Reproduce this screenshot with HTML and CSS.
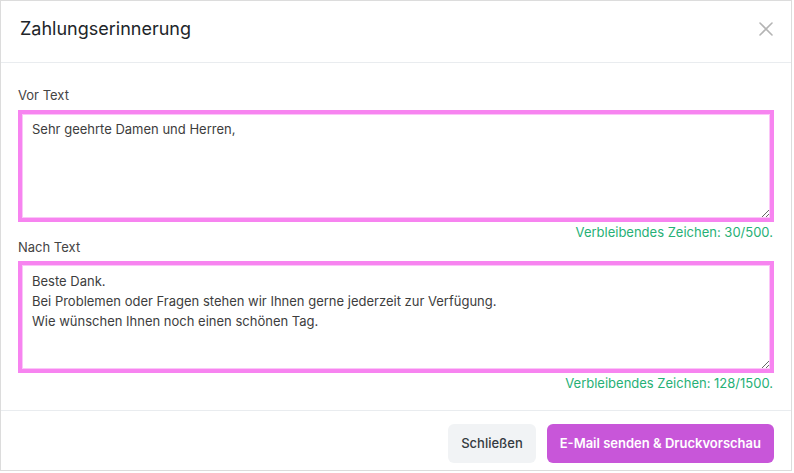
FILE: index.html
```html
<!DOCTYPE html>
<html lang="de">
<head>
<meta charset="utf-8">
<title>Zahlungserinnerung</title>
<link rel="stylesheet" href="styles.css">
</head>
<body>
<div class="modal">
  <div class="modal-header">
    <h1 class="modal-title">Zahlungserinnerung</h1>
    <button class="close" type="button" aria-label="Schließen">
      <svg width="14" height="14" viewBox="0 0 14 14"><path d="M1 1L13 13M13 1L1 13" stroke="#b4b4b4" stroke-width="1.6" fill="none" stroke-linecap="round"/></svg>
    </button>
  </div>
  <div class="modal-body">
    <div class="field">
      <label class="field-label">Vor Text</label>
      <textarea class="field-input field-input-first">Sehr geehrte Damen und Herren,</textarea>
      <div class="counter">Verbleibendes Zeichen: 30/500.</div>
    </div>
    <div class="field">
      <label class="field-label">Nach Text</label>
      <textarea class="field-input">Beste Dank.
Bei Problemen oder Fragen stehen wir Ihnen gerne jederzeit zur Verfügung.
Wie wünschen Ihnen noch einen schönen Tag.</textarea>
      <div class="counter">Verbleibendes Zeichen: 128/1500.</div>
    </div>
  </div>
  <div class="modal-footer">
    <button class="btn btn-secondary" type="button">Schließen</button>
    <button class="btn btn-primary" type="button">E-Mail senden &amp; Druckvorschau</button>
  </div>
</div>
</body>
</html>
```

FILE: styles.css
```css
* { box-sizing: border-box; }

html, body {
  margin: 0;
  padding: 0;
  background: #ffffff;
}

body {
  font-family: Inter, "Noto Sans", "Liberation Sans", sans-serif;
  color: #333;
}

.modal {
  width: 792px;
  border: 1px solid #dcdcdc;
  background: #fff;
}

.modal-header {
  height: 62px;
  display: flex;
  justify-content: space-between;
  align-items: flex-start;
  padding: 17px 18px 0 19px;
  border-bottom: 1px solid #e9ecef;
}

.modal-title {
  margin: 0;
  font-size: 18px;
  line-height: 22px;
  font-weight: 400;
  color: #212529;
}

.close {
  margin-top: 4px;
  width: 14px;
  height: 14px;
  padding: 0;
  border: 0;
  background: none;
  display: flex;
}

.modal-body {
  padding: 24px 17px 20px 17px;
}

.field {
  display: flex;
  flex-direction: column;
}

.field-label {
  font-size: 13px;
  line-height: 16px;
  color: #444;
  margin-bottom: 7px;
}

.field-input {
  display: block;
  width: 100%;
  height: 112px;
  margin: 0;
  border: 4px solid #f784f0;
  outline: 1px solid #fbc6f8;
  outline-offset: -5px;
  border-radius: 0;
  padding: 6px 10px;
  font-family: Inter, "Noto Sans", "Liberation Sans", sans-serif;
  font-size: 13px;
  line-height: 20px;
  color: #3d3d3d;
  background: #fff;
  resize: vertical;
}

.field-input-first {
  padding-top: 5px;
}

.counter {
  margin-top: 3px;
  font-size: 13px;
  line-height: 14px;
  color: #26b076;
  text-align: right;
  padding-right: 1px;
}

.field + .field .field-label {
  margin-bottom: 6px;
}

.modal-footer {
  display: flex;
  justify-content: flex-end;
  gap: 11px;
  height: 60px;
  padding: 13px 17px 0 0;
  border-top: 1px solid #e9ecef;
}

.btn {
  height: 39px;
  padding: 0 13px;
  border: 0;
  border-radius: 6px;
  font-family: Inter, "Noto Sans", "Liberation Sans", sans-serif;
  font-size: 13px;
  line-height: 39px;
}

.btn-secondary {
  background: #f1f3f5;
  color: #343a40;
  font-weight: 500;
}

.btn-primary {
  background: #c856d9;
  color: #fff;
  font-weight: 600;
}
```
